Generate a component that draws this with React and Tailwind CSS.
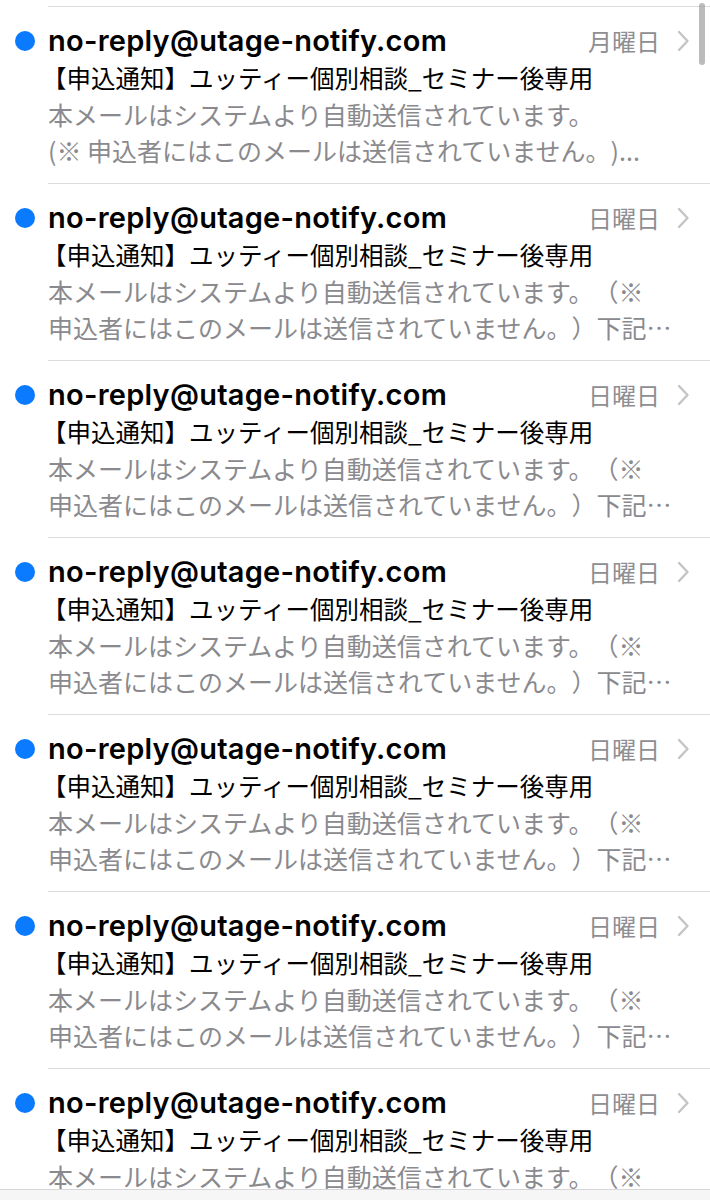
import React from 'react'

const mails = [
  {
    date: '月曜日',
    lines: ['本メールはシステムより自動送信されています。', '(※ 申込者にはこのメールは送信されていません。)...'],
  },
  ...Array.from({ length: 6 }, () => ({
    date: '日曜日',
    lines: ['本メールはシステムより自動送信されています。（※', '申込者にはこのメールは送信されていません。）下記…'],
  })),
]

const jp = 'font-["Noto_Sans_CJK_JP","Noto_Sans",sans-serif] [text-spacing-trim:space-all]'

const Chevron = () => (
  <svg width="14" height="22" viewBox="0 0 14 22" fill="none" className="shrink-0">
    <path d="M3 2 L11.5 11 L3 20" stroke="#c4c4c7" strokeWidth="2.4" strokeLinecap="round" strokeLinejoin="round" />
  </svg>
)

const MailRow = ({ mail }) => (
  <div className="flex">
    <div className="w-[48px] shrink-0 pt-[25px] pl-[15px]">
      <div className="w-[20px] h-[20px] rounded-full bg-[#0a7aff]" />
    </div>
    <div className="flex-1 min-w-0 border-t border-[#dcdce0] pt-[16px] pb-[15px]">
      <div className="flex items-center h-[36px] pr-[20px]">
        <span className="flex-1 text-[29px] font-semibold text-black tracking-[0.25px] font-['Inter',sans-serif] whitespace-nowrap">
          no-reply@utage-notify.com
        </span>
        <span className={`text-[24px] text-[#8e8e93] mr-[16px] ${jp}`}>{mail.date}</span>
        <Chevron />
      </div>
      <div className={`h-[37px] leading-[37px] -ml-[6px] text-[24.5px] text-black whitespace-nowrap ${jp}`}>
        【申込通知】ユッティー個別相談_セミナー後専用
      </div>
      {mail.lines.map((l, i) => (
        <div key={i} className={`h-[36px] leading-[36px] text-[25px] text-[#8a8a8e] whitespace-nowrap overflow-hidden ${jp}`}>
          {l}
        </div>
      ))}
    </div>
  </div>
)

export default function App() {
  return (
    <div className="relative w-[710px] h-[1200px] bg-white flex flex-col overflow-hidden">
      <div className="flex-1 overflow-hidden pt-[6px]">
        {mails.map((m, i) => (
          <MailRow key={i} mail={m} />
        ))}
      </div>
      <div className="h-[11px] shrink-0 border-t border-[#d6d6da] bg-[#f6f6f7]" />
      {/* scroll indicator */}
      <div className="absolute right-[5px] top-[3px] w-[6px] h-[62px] rounded-full bg-[#8e8e93]/60" />
    </div>
  )
}
